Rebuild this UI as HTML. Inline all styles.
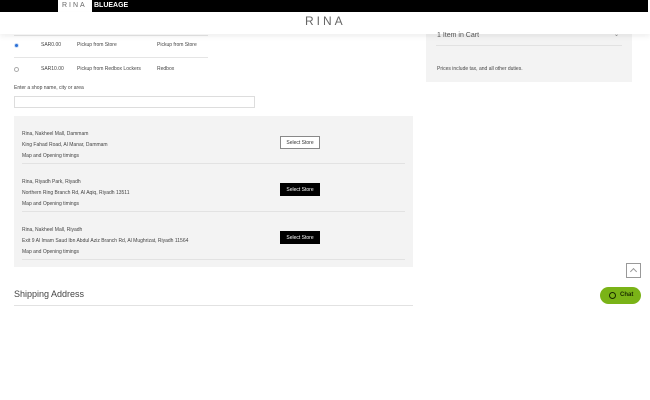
<!DOCTYPE html>
<html><head><style>
*{margin:0;padding:0;box-sizing:border-box}
body{width:650px;height:400px;background:#fff;font-family:"Liberation Sans",sans-serif;position:relative;overflow:hidden;color:#333}
.a{position:absolute}
.t{font-size:5px;color:#444;white-space:nowrap;font-family:"Liberation Sans Narrow","Liberation Sans",sans-serif}
.btn{position:absolute;left:280px;width:40px;height:13px;font-size:5px;display:flex;align-items:center;justify-content:center}
</style></head><body>
<div class="a" style="left:0;top:0;width:648px;height:12px;background:#000"></div>
<div class="a" style="left:58px;top:0;width:34px;height:12px;background:#fff;font-size:7px;color:#666;letter-spacing:2px;line-height:11px;padding-left:4px">RINA</div>
<div class="a" style="left:94px;top:0;font-size:7px;color:#fff;font-weight:bold;line-height:11px">BLUEAGE</div>
<div class="a" style="left:0;top:12px;width:650px;height:22px;background:#fff;box-shadow:0 3px 5px rgba(0,0,0,0.06);z-index:2"></div>
<div class="a" style="left:305px;top:14px;font-size:12px;color:#666;letter-spacing:3px;z-index:3">RINA</div>

<div class="a" style="left:14px;top:35px;width:194px;height:1px;background:#e5e5e5"></div>
<div class="a" style="left:14px;top:43px;width:5px;height:5px;border-radius:50%;background:#2a6fd6;border:1px solid #cfe0f7"></div>
<div class="a t" style="left:41px;top:42px">SAR0.00</div>
<div class="a t" style="left:77px;top:42px">Pickup from Store</div>
<div class="a t" style="left:157px;top:42px">Pickup from Store</div>
<div class="a" style="left:14px;top:57px;width:194px;height:1px;background:#e5e5e5"></div>
<div class="a" style="left:14px;top:67px;width:5px;height:5px;border-radius:50%;border:1px solid #aaa"></div>
<div class="a t" style="left:41px;top:66px">SAR10.00</div>
<div class="a t" style="left:77px;top:66px">Pickup from Redbox Lockers</div>
<div class="a t" style="left:157px;top:66px">Redbox</div>
<div class="a t" style="left:14px;top:85px">Enter a shop name, city or area</div>
<div class="a" style="left:14px;top:96px;width:241px;height:12px;border:1px solid #ddd"></div>

<div class="a" style="left:14px;top:116px;width:399px;height:151px;background:#f3f3f3"></div>
<div class="a t" style="left:22px;top:131px">Rina, Nakheel Mall, Dammam</div>
<div class="a t" style="left:22px;top:142px">King Fahad Road, Al Manar, Dammam</div>
<div class="a t" style="left:22px;top:153px">Map and Opening timings</div>
<div class="btn" style="top:136px;background:#fff;border:1px solid #888;color:#333">Select Store</div>
<div class="a" style="left:22px;top:163px;width:383px;height:1px;background:#e2e2e2"></div>
<div class="a t" style="left:22px;top:179px">Rina, Riyadh Park, Riyadh</div>
<div class="a t" style="left:22px;top:190px">Northern Ring Branch Rd, Al Aqiq, Riyadh 13511</div>
<div class="a t" style="left:22px;top:201px">Map and Opening timings</div>
<div class="btn" style="top:183px;background:#000;color:#fff">Select Store</div>
<div class="a" style="left:22px;top:211px;width:383px;height:1px;background:#e2e2e2"></div>
<div class="a t" style="left:22px;top:227px">Rina, Nakheel Mall, Riyadh</div>
<div class="a t" style="left:22px;top:238px">Exit 9 Al Imam Saud Ibn Abdul Aziz Branch Rd, Al Mughrizat, Riyadh 11564</div>
<div class="a t" style="left:22px;top:249px">Map and Opening timings</div>
<div class="btn" style="top:231px;background:#000;color:#fff">Select Store</div>
<div class="a" style="left:22px;top:259px;width:383px;height:1px;background:#e2e2e2"></div>

<div class="a" style="left:14px;top:289px;font-size:9px;color:#444;font-family:'Liberation Sans Narrow','Liberation Sans',sans-serif">Shipping Address</div>
<div class="a" style="left:14px;top:305px;width:399px;height:1px;background:#e2e2e2"></div>

<div class="a" style="left:426px;top:30px;width:206px;height:52px;background:#f3f3f3"></div>
<div class="a" style="left:437px;top:32px;font-size:7px;color:#555;z-index:3">1 Item in Cart</div>
<div class="a" style="left:614px;top:31px;font-size:6px;color:#777;z-index:3">&#8964;</div>
<div class="a" style="left:436px;top:45px;width:186px;height:1px;background:#e2e2e2"></div>
<div class="a t" style="left:437px;top:66px">Prices include tax, and all other duties.</div>

<div class="a" style="left:626px;top:263px;width:15px;height:15px;border:1px solid #999;background:#fff"></div>
<div class="a" style="left:631px;top:269px;width:5px;height:5px;border-left:1px solid #999;border-top:1px solid #999;transform:rotate(45deg)"></div>
<div class="a" style="left:600px;top:287px;width:41px;height:17px;border-radius:9px;background:#7ab317;color:#1a2a00;font-size:6px;font-weight:bold;line-height:17px;padding-left:20px">Chat</div>
<div class="a" style="left:609px;top:292px;width:7px;height:7px;border-radius:50%;border:1px solid #1a2a00"></div>
</body></html>
